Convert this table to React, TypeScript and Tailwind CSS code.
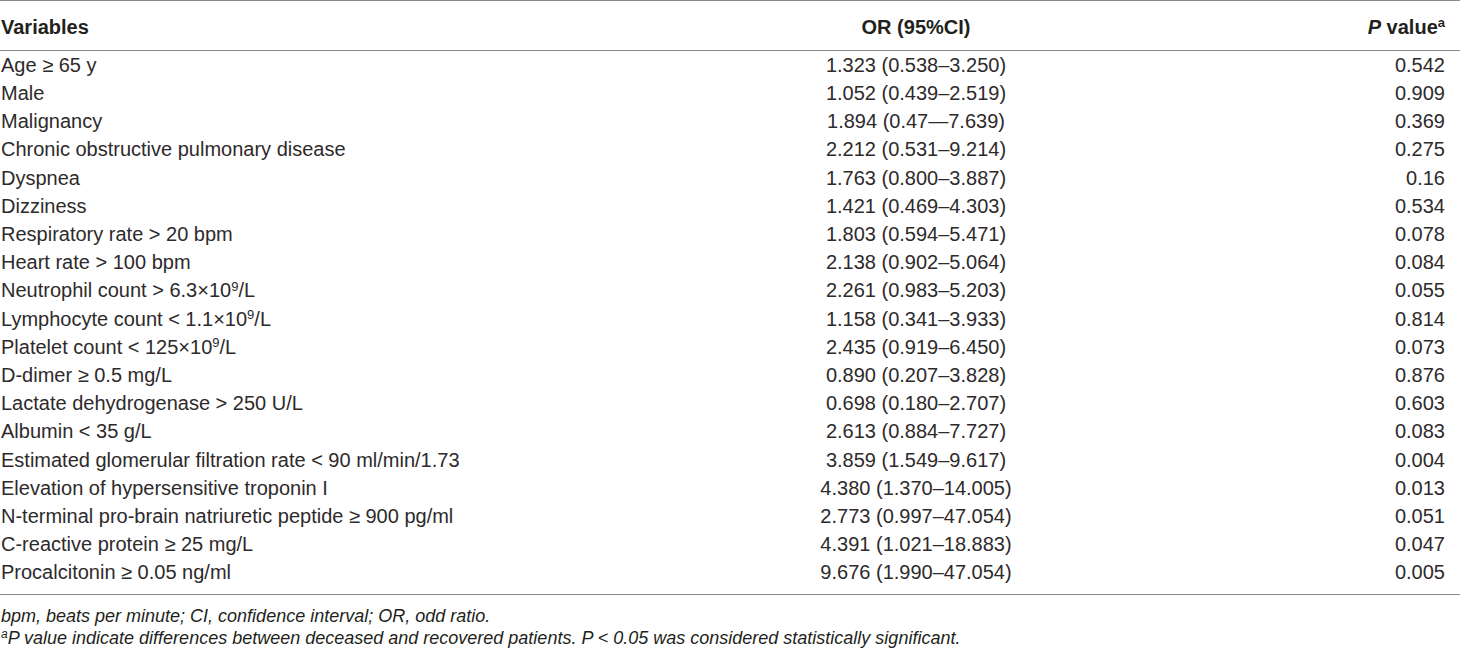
const ROWS: [React.ReactNode, string, string][] = [
  ["Age ≥ 65 y", "1.323 (0.538–3.250)", "0.542"],
  ["Male", "1.052 (0.439–2.519)", "0.909"],
  ["Malignancy", "1.894 (0.47—7.639)", "0.369"],
  ["Chronic obstructive pulmonary disease", "2.212 (0.531–9.214)", "0.275"],
  ["Dyspnea", "1.763 (0.800–3.887)", "0.16"],
  ["Dizziness", "1.421 (0.469–4.303)", "0.534"],
  ["Respiratory rate > 20 bpm", "1.803 (0.594–5.471)", "0.078"],
  ["Heart rate > 100 bpm", "2.138 (0.902–5.064)", "0.084"],
  [
    <>
      Neutrophil count &gt; 6.3×10<sup className="text-[13px]">9</sup>/L
    </>,
    "2.261 (0.983–5.203)",
    "0.055",
  ],
  [
    <>
      Lymphocyte count &lt; 1.1×10<sup className="text-[13px]">9</sup>/L
    </>,
    "1.158 (0.341–3.933)",
    "0.814",
  ],
  [
    <>
      Platelet count &lt; 125×10<sup className="text-[13px]">9</sup>/L
    </>,
    "2.435 (0.919–6.450)",
    "0.073",
  ],
  ["D-dimer ≥ 0.5 mg/L", "0.890 (0.207–3.828)", "0.876"],
  ["Lactate dehydrogenase > 250 U/L", "0.698 (0.180–2.707)", "0.603"],
  ["Albumin < 35 g/L", "2.613 (0.884–7.727)", "0.083"],
  ["Estimated glomerular filtration rate < 90 ml/min/1.73", "3.859 (1.549–9.617)", "0.004"],
  ["Elevation of hypersensitive troponin I", "4.380 (1.370–14.005)", "0.013"],
  ["N-terminal pro-brain natriuretic peptide ≥ 900 pg/ml", "2.773 (0.997–47.054)", "0.051"],
  ["C-reactive protein ≥ 25 mg/L", "4.391 (1.021–18.883)", "0.047"],
  ["Procalcitonin ≥ 0.05 ng/ml", "9.676 (1.990–47.054)", "0.005"],
];

export default function App() {
  return (
    <div className="w-[1460px] h-[651px] bg-white text-[#231f20] font-['Liberation_Sans',Arial,sans-serif] overflow-hidden">
      <table className="w-full border-collapse table-fixed">
        <colgroup>
          <col className="w-[572px]" />
          <col className="w-[688px]" />
          <col className="w-[200px]" />
        </colgroup>
        <thead>
          <tr className="border-t border-b border-[#8a8a8a] h-[50px] text-[20px]">
            <th className="text-left font-bold pl-[1px] pt-[2px]">Variables</th>
            <th className="text-center font-bold pt-[2px]">OR (95%CI)</th>
            <th className="text-right font-bold pr-[15px] pt-[2px]">
              <i>P</i> value<sup className="text-[13px]">a</sup>
            </th>
          </tr>
        </thead>
        <tbody className="text-[20px] text-[#2e2a2b]">
          {ROWS.map((r, i) => (
            <tr key={i} className="h-[28.2px]">
              <td className="pl-[1px] leading-[28px] whitespace-nowrap">{r[0]}</td>
              <td className="text-center leading-[28px]">{r[1]}</td>
              <td className="text-right pr-[15px] leading-[28px]">{r[2]}</td>
            </tr>
          ))}
          <tr className="h-[8px] border-b border-[#8a8a8a]">
            <td colSpan={3} />
          </tr>
        </tbody>
      </table>
      <div className="pt-[10px] text-[18px] italic leading-[22px] pl-[1px]">
        <p>bpm, beats per minute; CI, confidence interval; OR, odd ratio.</p>
        <p>
          <sup className="text-[12px]">a</sup>P value indicate differences between deceased and recovered patients. P &lt; 0.05 was considered statistically significant.
        </p>
      </div>
    </div>
  );
}
